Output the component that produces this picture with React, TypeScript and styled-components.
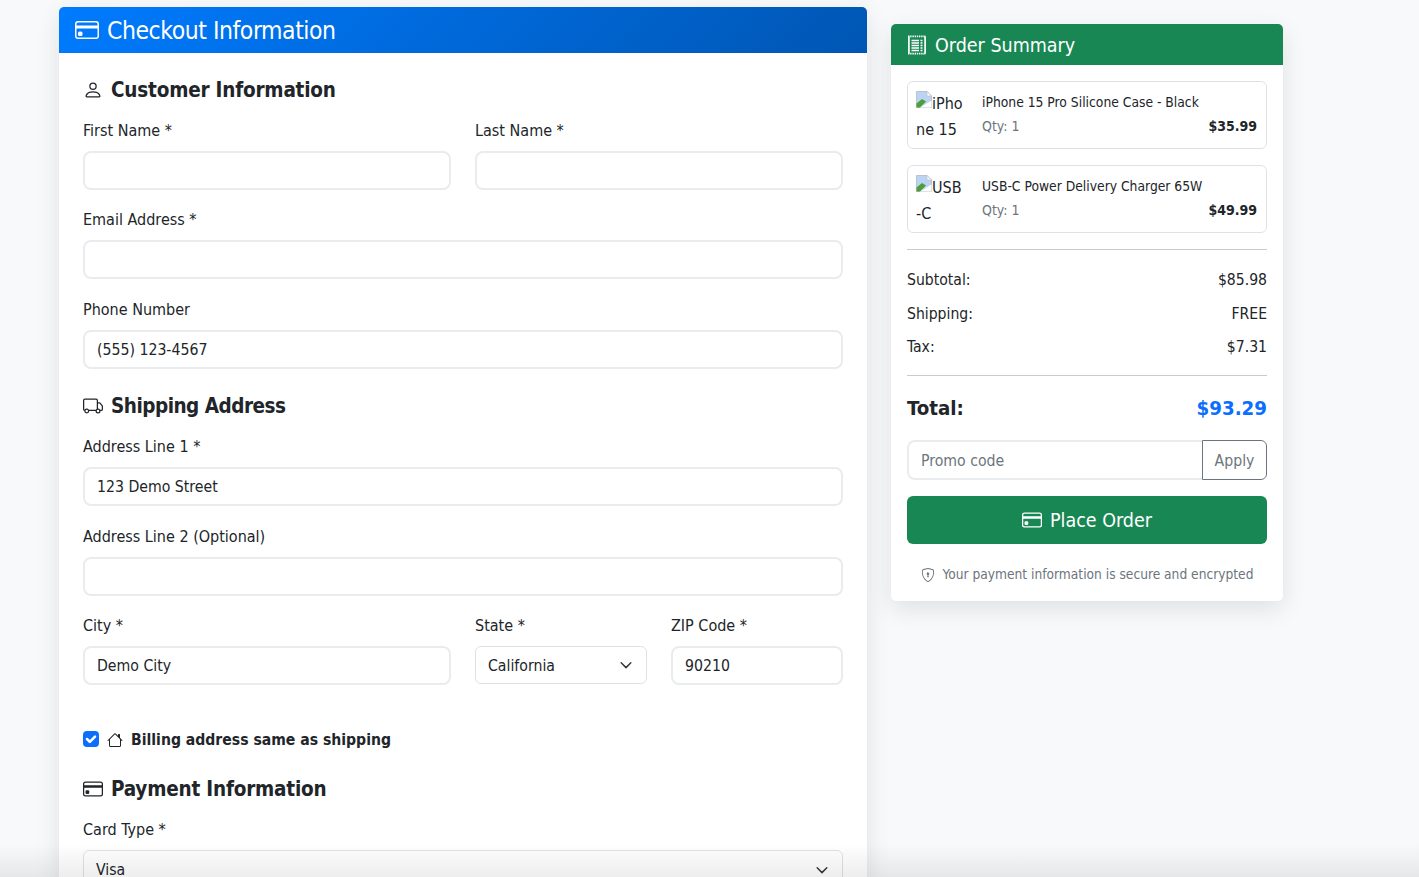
import React, { FC } from 'react';
import styled, { createGlobalStyle } from 'styled-components';
import { BsCreditCard, BsHouse, BsPerson, BsShieldLock, BsTruck } from 'react-icons/bs';

const GlobalStyle = createGlobalStyle`
	* { box-sizing: border-box; }
	html, body { margin: 0; height: 100%; overflow: hidden; }
	body {
		background: #f8f9fa;
		color: #212529;
		font-family: 'DejaVu Sans', sans-serif;
		font-stretch: condensed;
	}
`;

const Page = styled.div`
	position: relative;
	display: grid;
	grid-template-columns: 808px 392px;
	gap: 24px;
	align-items: start;
	height: 877px;
	overflow: hidden;
	padding: 7px 0 0 59px;
`;

const BottomFade = styled.div`
	position: absolute;
	left: 0;
	right: 0;
	bottom: 0;
	height: 34px;
	background: linear-gradient(to bottom, rgba(0, 0, 0, 0), rgba(0, 0, 0, 0.07));
	pointer-events: none;
`;

const Card = styled.section`
	background: #fff;
	border-radius: 5px;
	box-shadow: 0 8px 24px rgba(0, 0, 0, 0.1);
	overflow: hidden;
`;

const SummaryCard = styled(Card)`
	margin-top: 17px;
`;

const CheckoutHeader = styled.h1`
	display: flex;
	align-items: center;
	gap: 8px;
	height: 46px;
	margin: 0;
	padding: 0 16px;
	background: linear-gradient(135deg, #007bff, #0056b3);
	color: #fff;
	font-size: 24.5px;
	font-weight: 400;
	letter-spacing: -0.45px;
	svg {
		width: 24px;
		height: 24px;
	}
`;

const SummaryHeader = styled.h2`
	display: flex;
	align-items: center;
	gap: 8px;
	height: 41px;
	margin: 0;
	padding: 1px 16px 0;
	background: #198754;
	color: #fff;
	font-size: 19.5px;
	font-weight: 400;
`;

const FormBody = styled.div`
	padding: 24px 24px 0;
`;

const SectionTitle = styled.h3<{ $narrow?: boolean }>`
	display: flex;
	align-items: center;
	gap: 8px;
	height: 26px;
	margin: 24.5px 0 15.75px;
	font-size: 20.5px;
	font-weight: 700;
	letter-spacing: ${(p) => (p.$narrow ? -0.5 : -0.2)}px;
	svg {
		width: 20px;
		height: 20px;
	}
	&:first-child {
		margin-top: 0;
	}
`;

const Field = styled.div`
	margin-bottom: 18.5px;
`;

const Label = styled.label`
	display: block;
	height: 24px;
	margin-bottom: 8px;
	font-size: 16px;
	line-height: 24px;
`;

const TextInput = styled.input`
	display: block;
	width: 100%;
	height: 39px;
	padding: 0 12px;
	border: 2px solid #e9ecef;
	border-radius: 8px;
	background: #fff;
	color: #212529;
	font: inherit;
	font-size: 15.7px;
	outline: none;
	&::placeholder {
		color: #6c757d;
	}
`;

const SelectBox = styled.div<{ $tall?: boolean }>`
	display: flex;
	align-items: center;
	justify-content: space-between;
	height: ${(p) => (p.$tall ? 40 : 38)}px;
	padding: 0 13px 0 12px;
	border: 1px solid #dee2e6;
	border-radius: 6px;
	background: #fff;
	font-size: 15.7px;
`;

const Chevron: FC = () => (
	<svg width="14" height="14" viewBox="0 0 16 16" fill="none" stroke="#343a40" strokeWidth="1.7" strokeLinecap="round" strokeLinejoin="round">
		<path d="M2.5 5.5 8 11l5.5-5.5" />
	</svg>
);

const TwoColumns = styled.div`
	display: grid;
	grid-template-columns: 1fr 1fr;
	gap: 24px;
`;

const BillingRow = styled.label`
	display: flex;
	align-items: center;
	gap: 8px;
	height: 24px;
	margin: 24px 0 24px;
	font-size: 15.6px;
	font-weight: 700;
	svg {
		width: 16px;
		height: 16px;
	}
`;

const CheckBox = styled.span`
	display: flex;
	align-items: center;
	justify-content: center;
	width: 16px;
	height: 16px;
	margin-top: -1px;
	border-radius: 4px;
	background: #0d6efd;
`;

const SummaryBody = styled.div`
	padding: 16px;
`;

const Item = styled.div`
	display: flex;
	gap: 16px;
	height: 68px;
	margin-bottom: 16px;
	padding: 8px;
	border: 1px solid #dee2e6;
	border-radius: 6px;
`;

const BrokenImage = styled.div`
	flex: none;
	width: 50px;
	height: 50px;
	padding-top: 1px;
	font-size: 16px;
	line-height: 26px;
	word-break: break-all;
	svg {
		vertical-align: 1px;
	}
`;

const ItemInfo = styled.div`
	flex: 1;
	display: flex;
	flex-direction: column;
	padding-top: 2px;
	padding-right: 1px;
`;

const ItemName = styled.div`
	margin-bottom: 3px;
	font-size: 13.75px;
	line-height: 21px;
`;

const ItemMeta = styled.div`
	display: flex;
	align-items: center;
	justify-content: space-between;
	line-height: 21px;
`;

const Qty = styled.span`
	color: #6c757d;
	font-size: 14px;
`;

const Price = styled.strong`
	font-size: 14px;
`;

const Divider = styled.hr<{ $tight?: boolean }>`
	margin: 16px 0 ${(p) => (p.$tight ? 16 : 18)}px;
	border: 0;
	border-top: 1px solid #c9cbcd;
`;

const TotalLine = styled.div`
	display: flex;
	justify-content: space-between;
	margin-bottom: 9.5px;
	font-size: 15.6px;
	line-height: 24px;
`;

const GrandTotal = styled.div`
	display: flex;
	align-items: center;
	justify-content: space-between;
	height: 32px;
	margin-bottom: 16px;
	font-size: 20.3px;
	font-weight: 700;
`;

const TotalAmount = styled.span`
	color: #0d6efd;
`;

const PromoRow = styled.div`
	display: flex;
	height: 40px;
	margin-bottom: 16px;
`;

const PromoInput = styled(TextInput)`
	flex: 1;
	height: 40px;
	border-radius: 8px 0 0 8px;
	border-right: 0;
`;

const ApplyButton = styled.button`
	width: 65px;
	border: 1px solid #6c757d;
	border-radius: 0 6px 6px 0;
	background: #fff;
	color: #6c757d;
	font: inherit;
	font-size: 15.7px;
`;

const PlaceOrder = styled.button`
	display: flex;
	align-items: center;
	justify-content: center;
	gap: 8px;
	width: 100%;
	height: 48px;
	border: 0;
	border-radius: 6px;
	background: #198754;
	color: #fff;
	font: inherit;
	font-size: 19.5px;
	svg {
		width: 20px;
		height: 20px;
	}
`;

const SecureNote = styled.p`
	display: flex;
	align-items: center;
	justify-content: center;
	gap: 8px;
	margin: 20px 0 0;
	color: #6c757d;
	font-size: 13.65px;
	line-height: 21px;
	svg {
		width: 14px;
		height: 14px;
	}
`;

const ReceiptIcon: FC = () => (
	<svg width="20" height="20" viewBox="0 0 20 20" fill="none" stroke="#fff">
		<path d="M1.9 1.5v17M18.1 1.5v17" strokeWidth="1.7" />
		<path d="M1 1.4h18M1 18.6h18" strokeWidth="1.7" strokeDasharray="1.4 0.8" />
		<path d="M4.5 5.5h7.5M4.5 8h7.5M4.5 10.5h7.5M4.5 13h7.5M4.5 15.5h7.5M13.5 5.5h2M13.5 8h2M13.5 10.5h2M13.5 13h2M13.5 15.5h2" strokeWidth="1.5" />
	</svg>
);

const BrokenIcon: FC = () => (
	<svg width="16" height="17" viewBox="0 0 16 17">
		<path d="M.5.5h10.5l4.5 4.5v11.5H.5z" fill="#bcd4f4" stroke="#b4b8c0" strokeWidth="0.8" />
		<path d="M11 .5V5h4.5z" fill="#fff" stroke="#b4b8c0" strokeWidth="0.6" />
		<path d="M.5 16.5v-4l5.5-4.5 4 2.5-6 6z" fill="#4f9e3a" />
		<path d="M4 16.5 15.5 9.5v7z" fill="#fff" />
	</svg>
);

const Tick: FC = () => (
	<svg width="12" height="12" viewBox="0 0 20 20" fill="none" stroke="#fff" strokeWidth="3.2" strokeLinecap="round" strokeLinejoin="round">
		<path d="m5 10 3.5 3.5L15 7" />
	</svg>
);

const items = [
	{ alt: 'iPhone 15', name: 'iPhone 15 Pro Silicone Case - Black', price: '$35.99' },
	{ alt: 'USB-C', name: 'USB-C Power Delivery Charger 65W', price: '$49.99' },
];

const totals = [
	['Subtotal:', '$85.98'],
	['Shipping:', 'FREE'],
	['Tax:', '$7.31'],
];

const TextField: FC<{ label: string; value?: string }> = ({ label, value }) => (
	<Field>
		<Label>{label}</Label>
		<TextInput defaultValue={value} />
	</Field>
);

const App: FC = () => (
	<Page>
		<GlobalStyle />
		<Card>
			<CheckoutHeader>
				<BsCreditCard />
				Checkout Information
			</CheckoutHeader>
			<FormBody>
				<SectionTitle>
					<BsPerson />
					Customer Information
				</SectionTitle>
				<TwoColumns>
					<TextField label="First Name *" />
					<TextField label="Last Name *" />
				</TwoColumns>
				<TextField label="Email Address *" />
				<TextField label="Phone Number" value="(555) 123-4567" />

				<SectionTitle $narrow>
					<BsTruck />
					Shipping Address
				</SectionTitle>
				<TextField label="Address Line 1 *" value="123 Demo Street" />
				<TextField label="Address Line 2 (Optional)" />
				<TwoColumns>
					<TextField label="City *" value="Demo City" />
					<TwoColumns>
						<Field>
							<Label>State *</Label>
							<SelectBox>
								California
								<Chevron />
							</SelectBox>
						</Field>
						<TextField label="ZIP Code *" value="90210" />
					</TwoColumns>
				</TwoColumns>

				<BillingRow>
					<CheckBox>
						<Tick />
					</CheckBox>
					<BsHouse />
					Billing address same as shipping
				</BillingRow>

				<SectionTitle>
					<BsCreditCard />
					Payment Information
				</SectionTitle>
				<Field>
					<Label>Card Type *</Label>
					<SelectBox $tall>
						Visa
						<Chevron />
					</SelectBox>
				</Field>
			</FormBody>
		</Card>

		<SummaryCard>
			<SummaryHeader>
				<ReceiptIcon />
				Order Summary
			</SummaryHeader>
			<SummaryBody>
				{items.map((item) => (
					<Item key={item.name}>
						<BrokenImage>
							<BrokenIcon />
							{item.alt}
						</BrokenImage>
						<ItemInfo>
							<ItemName>{item.name}</ItemName>
							<ItemMeta>
								<Qty>Qty: 1</Qty>
								<Price>{item.price}</Price>
							</ItemMeta>
						</ItemInfo>
					</Item>
				))}
				<Divider />
				{totals.map(([label, amount]) => (
					<TotalLine key={label}>
						<span>{label}</span>
						<span>{amount}</span>
					</TotalLine>
				))}
				<Divider $tight />
				<GrandTotal>
					<span>Total:</span>
					<TotalAmount>$93.29</TotalAmount>
				</GrandTotal>
				<PromoRow>
					<PromoInput placeholder="Promo code" />
					<ApplyButton>Apply</ApplyButton>
				</PromoRow>
				<PlaceOrder>
					<BsCreditCard />
					Place Order
				</PlaceOrder>
				<SecureNote>
					<BsShieldLock />
					Your payment information is secure and encrypted
				</SecureNote>
			</SummaryBody>
		</SummaryCard>
		<BottomFade />
	</Page>
);

export default App;
